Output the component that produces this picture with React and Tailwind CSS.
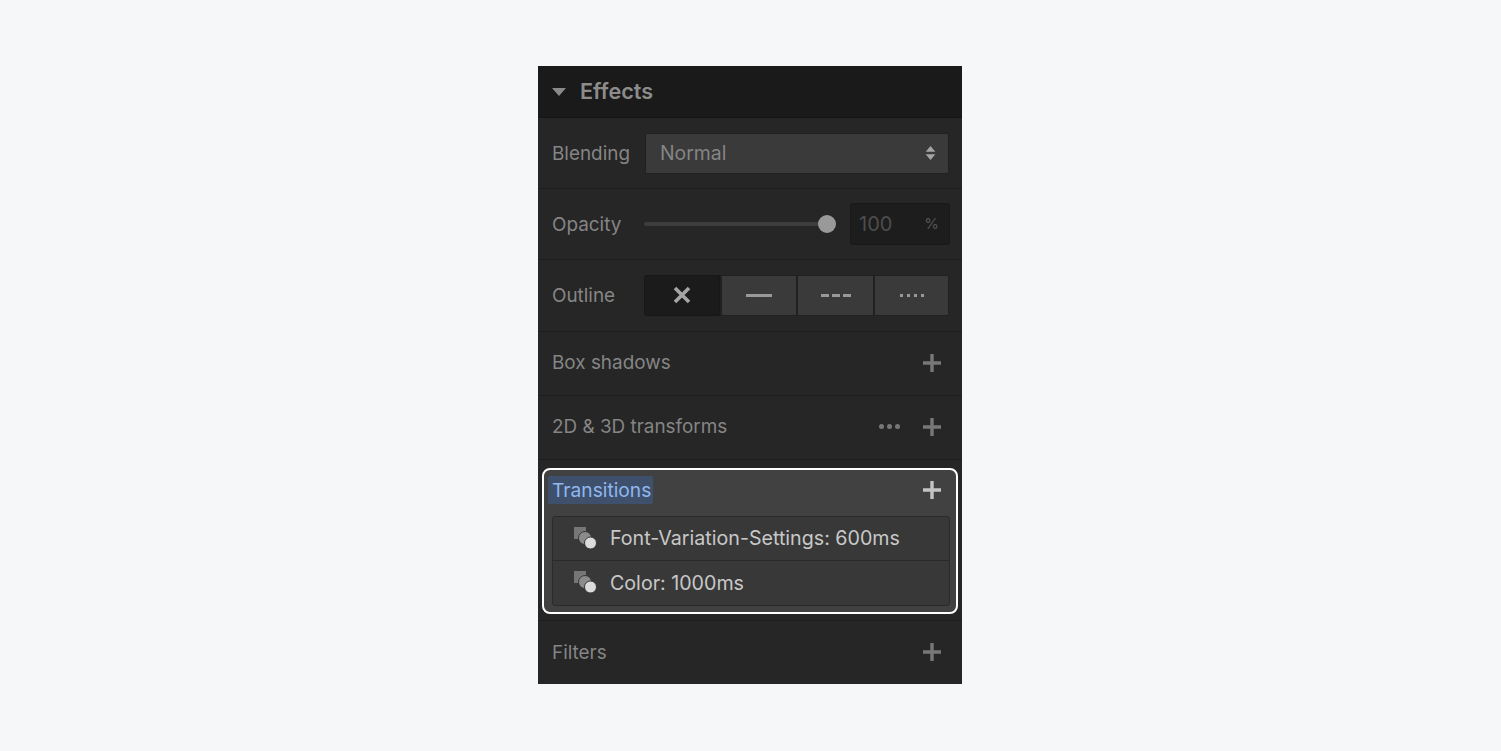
import React from "react";

function Plus({ color = "#777" }) {
  return (
    <svg width="18" height="18" viewBox="0 0 18 18" className="shrink-0">
      <path d="M9 0v18M0 9h18" stroke={color} strokeWidth="3.4" />
    </svg>
  );
}

function TransitionIcon() {
  return (
    <svg width="24" height="24" viewBox="0 0 24 24" className="shrink-0">
      <rect x="0" y="0" width="12" height="12" fill="#767676" />
      <circle cx="11" cy="11" r="6.5" fill="#8b8b8b" stroke="#383838" strokeWidth="1" />
      <circle cx="16.5" cy="16" r="6" fill="#dcdcdc" stroke="#383838" strokeWidth="1" />
    </svg>
  );
}

function AddRow({ label, dots, labelClass = "mt-[2px]" }) {
  return (
    <div className="h-[64px] flex items-center justify-between pl-[14px] pr-[21px] pb-[2px] border-b border-[#1e1e1e]">
      <span className={`text-[#858585] text-[18.9px] ${labelClass}`}>{label}</span>
      <div className="flex items-center gap-[23px]">
        {dots && (
          <div className="flex gap-[3px]">
            <span className="w-[5px] h-[5px] rounded-full bg-[#777]" />
            <span className="w-[5px] h-[5px] rounded-full bg-[#777]" />
            <span className="w-[5px] h-[5px] rounded-full bg-[#777]" />
          </div>
        )}
        <Plus />
      </div>
    </div>
  );
}

export default function App() {
  return (
    <div className="h-[751px] bg-[#f6f7f9] pt-[66px] flex justify-center font-['Inter',sans-serif] text-[20px]">
      <div className="w-[424px] mr-px h-[618px] bg-[#262626] overflow-hidden">
        <div className="h-[52px] bg-[#1a1a1a] border-b border-[#151515] flex items-center pl-[14px] gap-[14px]">
          <svg width="14" height="8" viewBox="0 0 14 8"><path d="M0 0h14L7 8z" fill="#8a8a8a" /></svg>
          <span className="text-[#8c8c8c] font-semibold text-[21.6px]">Effects</span>
        </div>

        <div className="h-[71px] flex items-center pl-[14px] pr-[13px] border-b border-[#1e1e1e]">
          <span className="w-[93px] text-[#858585] text-[18.9px] mt-[2px]">Blending</span>
          <div className="flex-1 h-[41px] rounded-[2px] bg-[#3a3a3a] border border-[#212121] flex items-center justify-between pl-[14px] pr-[12px] text-[#858585] text-[19.4px]">
            <span className="mt-[2px]">Normal</span>
            <svg width="11" height="14" viewBox="0 0 12 16"><path d="M6 0l5.5 6.5H.5zM6 16L.5 9.5h11z" fill="#a5a5a5" /></svg>
          </div>
        </div>

        <div className="h-[71px] flex items-center pl-[14px] pr-[12px] border-b border-[#1e1e1e]">
          <span className="w-[92px] text-[#858585] text-[18.9px] mt-[2px]">Opacity</span>
          <div className="w-[191px] h-[4px] rounded-full bg-[#3e3e3e] flex items-center justify-end">
            <span className="w-[18px] h-[18px] rounded-full bg-[#999] -mr-[1px]" />
          </div>
          <div className="ml-[15px] flex-1 h-[42px] rounded-[3px] bg-[#1d1d1d] border border-[#191919] flex items-center justify-between pl-[8px] pr-[10px] text-[#4d4d4d]">
            100
            <span className="text-[15px] text-[#555]">%</span>
          </div>
        </div>

        <div className="h-[72px] flex items-center pl-[14px] pr-[13px] border-b border-[#1e1e1e]">
          <span className="w-[92px] text-[#858585] text-[18.9px] mt-[1px]">Outline</span>
          <div className="flex-1 h-[41px] flex rounded-[3px] bg-[#212121] p-px gap-[2px]">
            <div className="w-[76px] -ml-px -my-px rounded-l-[3px] bg-[#1b1b1b] border border-[#171717] flex items-center justify-center">
              <svg width="18" height="18" viewBox="0 0 18 18" className="-mt-[2px]"><path d="M2 2l14 14M16 2L2 16" stroke="#a5a5a5" strokeWidth="3.6" /></svg>
            </div>
            <div className="w-[74px] bg-[#3a3a3a] flex items-center justify-center">
              <span className="w-[26px] h-[3px] bg-[#999]" />
            </div>
            <div className="w-[75px] bg-[#3a3a3a] flex items-center justify-center gap-[3px]">
              <span className="w-[8px] h-[3px] bg-[#999]" />
              <span className="w-[8px] h-[3px] bg-[#999]" />
              <span className="w-[8px] h-[3px] bg-[#999]" />
            </div>
            <div className="flex-1 bg-[#3a3a3a] flex items-center justify-center gap-[4px]">
              <span className="w-[3px] h-[3px] bg-[#999]" />
              <span className="w-[3px] h-[3px] bg-[#999]" />
              <span className="w-[3px] h-[3px] bg-[#999]" />
              <span className="w-[3px] h-[3px] bg-[#999]" />
            </div>
          </div>
        </div>

        <AddRow label="Box shadows" />
        <AddRow label="2D & 3D transforms" dots />

        <div className="h-[161px] pt-[8px] pl-[4px] pr-[4px] border-b border-[#1e1e1e]">
          <div className="h-[146px] rounded-[8px] border-2 border-white bg-[#414141] pl-[8px] pr-[6px] pt-[5px]">
            <div className="flex items-center justify-between h-[30px] pr-[9px]">
              <span className="bg-[#3f506c] text-[#8fb8f0] rounded-[2px] h-[28px] leading-[28px] pl-[4px] pr-[2px] -ml-[4px] text-[19.2px]">Transitions</span>
              <Plus color="#c4c4c4" />
            </div>
            <div className="mt-[11px] h-[90px] rounded-[3px] bg-[#383838] border border-[#2a2a2a] text-[#c8c8c8] text-[19.65px]">
              <div className="h-[44px] flex items-center pl-[21px] gap-[12px] border-b border-[#2a2a2a]">
                <TransitionIcon />
                <span className="mt-[1px]">Font-Variation-Settings: 600ms</span>
              </div>
              <div className="h-[44px] flex items-center pl-[21px] gap-[12px]">
                <TransitionIcon />
                <span className="mt-[2px]">Color: 1000ms</span>
              </div>
            </div>
          </div>
        </div>

        <AddRow label="Filters" labelClass="mt-[4px]" />
      </div>
    </div>
  );
}
